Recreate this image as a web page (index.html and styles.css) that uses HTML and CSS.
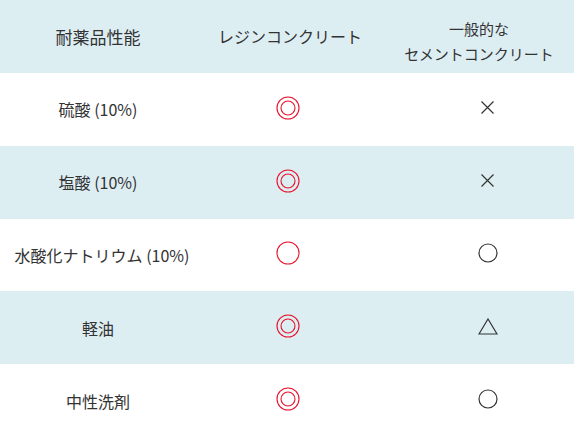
FILE: index.html
```html
<!DOCTYPE html>
<html lang="ja">
<head>
<meta charset="utf-8">
<link rel="stylesheet" href="styles.css">
</head>
<body>
<div class="table">
  <div class="row shade">
    <div class="cell c1 head">耐薬品性能</div>
    <div class="cell c2 head">レジンコンクリート</div>
    <div class="cell c3 head two">一般的な<br>セメントコンクリート</div>
  </div>
  <div class="row">
    <div class="cell c1">硫酸 (10%)</div>
    <div class="cell c2 sym"><svg class="ic24" viewBox="0 0 24 24"><circle cx="12" cy="12" r="11" class="red"/><circle cx="12" cy="12" r="7" class="red"/></svg></div>
    <div class="cell c3 sym right"><svg class="ic13" viewBox="0 0 13 13"><path d="M0.5 0.5 L12.5 12.5 M12.5 0.5 L0.5 12.5" class="blk"/></svg></div>
  </div>
  <div class="row shade">
    <div class="cell c1">塩酸 (10%)</div>
    <div class="cell c2 sym"><svg class="ic24" viewBox="0 0 24 24"><circle cx="12" cy="12" r="11" class="red"/><circle cx="12" cy="12" r="7" class="red"/></svg></div>
    <div class="cell c3 sym right"><svg class="ic13" viewBox="0 0 13 13"><path d="M0.5 0.5 L12.5 12.5 M12.5 0.5 L0.5 12.5" class="blk"/></svg></div>
  </div>
  <div class="row">
    <div class="cell c1 wide">水酸化ナトリウム (10%)</div>
    <div class="cell c2 sym"><svg class="ic24" viewBox="0 0 24 24"><circle cx="12" cy="12" r="11" class="red"/></svg></div>
    <div class="cell c3 sym right"><svg class="ic20" viewBox="0 0 20 20"><circle cx="10" cy="10" r="9" class="blk"/></svg></div>
  </div>
  <div class="row shade">
    <div class="cell c1">軽油</div>
    <div class="cell c2 sym"><svg class="ic24" viewBox="0 0 24 24"><circle cx="12" cy="12" r="11" class="red"/><circle cx="12" cy="12" r="7" class="red"/></svg></div>
    <div class="cell c3 sym right"><svg class="tri" viewBox="0 0 20 17"><path d="M1 16 L10 1 L19 16 Z" class="blk"/></svg></div>
  </div>
  <div class="row">
    <div class="cell c1">中性洗剤</div>
    <div class="cell c2 sym"><svg class="ic24" viewBox="0 0 24 24"><circle cx="12" cy="12" r="11" class="red"/><circle cx="12" cy="12" r="7" class="red"/></svg></div>
    <div class="cell c3 sym right"><svg class="ic20" viewBox="0 0 20 20"><circle cx="10" cy="10" r="9" class="blk"/></svg></div>
  </div>
</div>
</body>
</html>
```
FILE: styles.css
```css
html, body {
  margin: 0;
  padding: 0;
  background: #fff;
}
body {
  font-family: "Noto Sans CJK JP", "Noto Sans", sans-serif;
  color: #333;
  width: 574px;
  height: 437px;
  overflow: hidden;
}
.table {
  display: grid;
  grid-template-rows: repeat(6, 1fr);
  height: 437px;
}
.row {
  display: grid;
  grid-template-columns: 196px 188px 190px;
}
.shade {
  background: #ddeef3;
}
.cell {
  display: flex;
  align-items: center;
  justify-content: center;
  text-align: center;
  font-size: 16px;
  line-height: 1;
}
.wide {
  padding-left: 8px;
}
.head {
  font-size: 16px;
}
.c1.head {
  font-size: 17px;
}
.two {
  font-size: 15px;
  line-height: 25px;
  padding-top: 10px;
}
.right {
  padding-left: 17px;
}
.sym {
  padding-bottom: 3px;
}
.c2.sym {
  padding-right: 5px;
}
.ic24 { width: 24px; height: 24px; display: block; }
.ic20 { width: 20px; height: 20px; display: block; }
.ic13 { width: 13px; height: 13px; display: block; }
.tri { width: 20px; height: 17px; display: block; }
.red {
  fill: none;
  stroke: #e8102a;
  stroke-width: 1.1;
}
.blk {
  fill: none;
  stroke: #333;
  stroke-width: 1.2;
}
```
